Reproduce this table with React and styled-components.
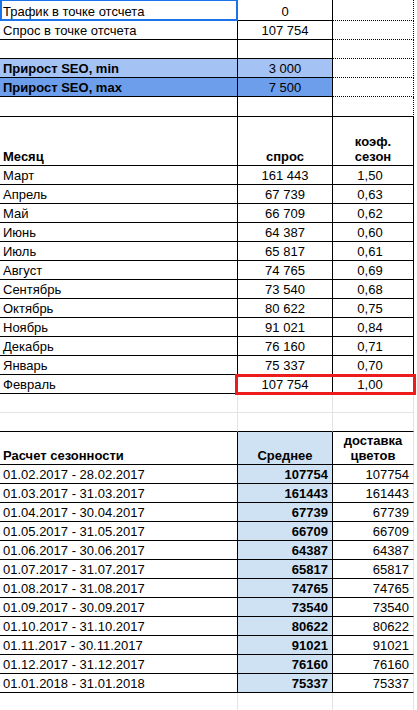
import React from "react";
import styled, { createGlobalStyle } from "styled-components";

const Global = createGlobalStyle`
  html, body { margin: 0; padding: 0; background: #fff; }
  body { font-family: "Liberation Sans", Arial, sans-serif; font-size: 13px; color: #000; }
`;

const line = (kind) =>
  kind === "solid"
    ? "1px solid #000"
    : kind === "dotted"
    ? "1px dotted #000"
    : kind === "grey"
    ? "1px solid #e2e3e3"
    : "1px solid transparent";

const Sheet = styled.div`
  position: relative;
  width: 417px;
  height: 710px;
  overflow: hidden;
`;

const Row = styled.div`
  display: grid;
  grid-template-columns: 238px 95px 81px 1fr;
  height: ${(p) => p.$h}px;
`;

const Cell = styled.div`
  box-sizing: border-box;
  display: flex;
  flex-direction: column;
  justify-content: flex-end;
  align-items: ${(p) =>
    p.$align === "center" ? "center" : p.$align === "right" ? "flex-end" : "flex-start"};
  padding: 0 ${(p) => (p.$inset ? "9px" : p.$align === "right" ? "4px" : "3px")} 1px 3px;
  font-weight: ${(p) => (p.$bold ? 700 : 400)};
  background: ${(p) => p.$bg || "transparent"};
  border-right: ${(p) => line(p.$r)};
  border-bottom: ${(p) => line(p.$b)};
  line-height: 15px;
  white-space: nowrap;
  overflow: hidden;
`;

const Selection = styled.div`
  position: absolute;
  left: 0;
  top: -1px;
  width: 238px;
  height: 22px;
  box-sizing: border-box;
  border: 2px solid #1a73e8;
  pointer-events: none;
`;

const Highlight = styled.div`
  position: absolute;
  left: 235px;
  top: 374px;
  width: 181px;
  height: 21px;
  box-sizing: border-box;
  border: 3px solid #ec1c1c;
  pointer-events: none;
`;

const months = [
  ["Март", "161 443", "1,50"],
  ["Апрель", "67 739", "0,63"],
  ["Май", "66 709", "0,62"],
  ["Июнь", "64 387", "0,60"],
  ["Июль", "65 817", "0,61"],
  ["Август", "74 765", "0,69"],
  ["Сентябрь", "73 540", "0,68"],
  ["Октябрь", "80 622", "0,75"],
  ["Ноябрь", "91 021", "0,84"],
  ["Декабрь", "76 160", "0,71"],
  ["Январь", "75 337", "0,70"],
  ["Февраль", "107 754", "1,00"],
];

const periods = [
  ["01.02.2017 - 28.02.2017", "107754"],
  ["01.03.2017 - 31.03.2017", "161443"],
  ["01.04.2017 - 30.04.2017", "67739"],
  ["01.05.2017 - 31.05.2017", "66709"],
  ["01.06.2017 - 30.06.2017", "64387"],
  ["01.07.2017 - 31.07.2017", "65817"],
  ["01.08.2017 - 31.08.2017", "74765"],
  ["01.09.2017 - 30.09.2017", "73540"],
  ["01.10.2017 - 31.10.2017", "80622"],
  ["01.11.2017 - 30.11.2017", "91021"],
  ["01.12.2017 - 31.12.2017", "76160"],
  ["01.01.2018 - 31.01.2018", "75337"],
];

const top = [
  { h: 21, a: "Трафик в точке отсчета", b: "0" },
  { h: 19, a: "Спрос в точке отсчета", b: "107 754" },
  { h: 19, a: "", b: "" },
  { h: 19, a: "Прирост SEO, min", b: "3 000", bold: true, bg: "#a4c2f4" },
  { h: 19, a: "Прирост SEO, max", b: "7 500", bold: true, bg: "#6d9eeb" },
  { h: 20, a: "", b: "", last: true },
];

const BLUE = "#cfe2f3";

export default function App() {
  return (
    <>
      <Global />
      <Sheet>
        {top.map((r, i) => (
          <Row key={"t" + i} $h={r.h}>
            <Cell $r="solid" $b="solid" $bold={r.bold} $bg={r.bg}>{r.a}</Cell>
            <Cell $r="solid" $b="solid" $align="center" $bg={r.bg}>{r.b}</Cell>
            <Cell $r="dotted" $b={r.last ? "solid" : "dotted"} />
            <Cell />
          </Row>
        ))}

        <Row $h={49}>
          <Cell $r="solid" $b="solid" $bold>Месяц</Cell>
          <Cell $r="solid" $b="solid" $bold $align="center">спрос</Cell>
          <Cell $r="solid" $b="solid" $bold $align="center">
            <span>коэф.</span>
            <span>сезон</span>
          </Cell>
          <Cell />
        </Row>
        {months.map(([m, d, k]) => (
          <Row key={m} $h={19}>
            <Cell $r="solid" $b="solid">{m}</Cell>
            <Cell $r="solid" $b="solid" $align="center">{d}</Cell>
            <Cell $r="solid" $b="solid" $align="center" $inset>{k}</Cell>
            <Cell />
          </Row>
        ))}

        <Row $h={19}>
          <Cell $r="grey" $b="grey" />
          <Cell $r="grey" $b="grey" />
          <Cell $r="grey" $b="grey" />
          <Cell />
        </Row>
        <Row $h={19}>
          <Cell $r="grey" $b="solid" />
          <Cell $r="grey" $b="solid" />
          <Cell $r="grey" $b="solid" />
          <Cell />
        </Row>

        <Row $h={33}>
          <Cell $r="solid" $b="solid" $bold>Расчет сезонности</Cell>
          <Cell $r="solid" $b="solid" $bold $align="center" $bg={BLUE}>Среднее</Cell>
          <Cell $r="grey" $b="solid" $bold $align="center">
            <span>доставка</span>
            <span>цветов</span>
          </Cell>
          <Cell />
        </Row>
        {periods.map(([p, v]) => (
          <Row key={p} $h={19}>
            <Cell $r="solid" $b="solid">{p}</Cell>
            <Cell $r="solid" $b="solid" $bold $align="right" $bg={BLUE}>{v}</Cell>
            <Cell $r="grey" $b="solid" $align="right">{v}</Cell>
            <Cell />
          </Row>
        ))}
        <Row $h={19}>
          <Cell $r="grey" $b="grey" />
          <Cell $r="grey" $b="grey" />
          <Cell $r="grey" $b="grey" />
          <Cell />
        </Row>

        <Selection />
        <Highlight />
      </Sheet>
    </>
  );
}
